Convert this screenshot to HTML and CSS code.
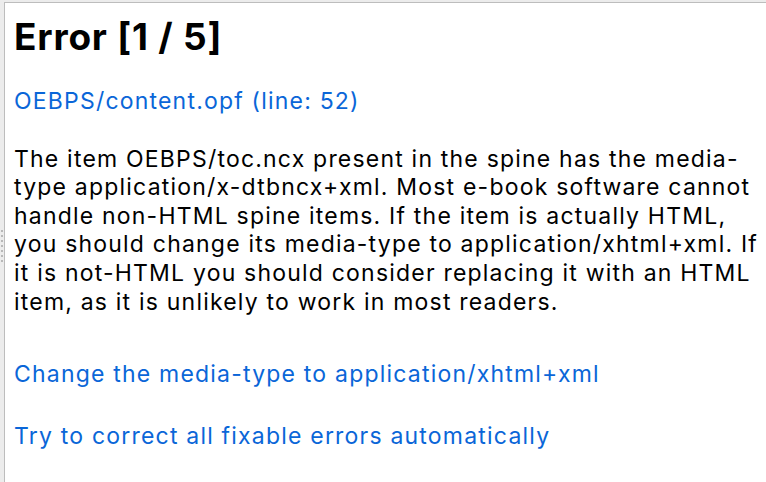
FILE: index.html
```html
<!DOCTYPE html>
<html lang="en">
<head>
<meta charset="utf-8">
<title>Error</title>
<link rel="stylesheet" href="styles.css">
</head>
<body>
<div class="gutter">
  <div class="grip"><span></span><span></span><span></span><span></span><span></span><span></span><span></span></div>
</div>
<main class="panel">
  <h1 class="title">Error [1 / 5]</h1>
  <p class="loc"><a href="#">OEBPS/content.opf (line: 52)</a></p>
  <p class="msg">The item OEBPS/toc.ncx present in the spine has the media-type application/x-dtbncx+xml. Most e-book software cannot handle non-HTML spine items. If the item is actually HTML, you should change its media-type to application/xhtml+xml. If it is not-HTML you should consider replacing it with an HTML item, as it is unlikely to work in most readers.</p>
  <p class="action"><a href="#">Change the media-type to application/xhtml+xml</a></p>
  <p class="action"><a href="#">Try to correct all fixable errors automatically</a></p>
</main>
</body>
</html>
```
FILE: styles.css
```css
html, body {
  margin: 0;
  height: 100%;
}
body {
  display: flex;
  box-sizing: border-box;
  padding-top: 2px;
  background: #ececec;
  font-family: "Inter", "Liberation Sans", sans-serif;
  color: #000;
  overflow: hidden;
}
.gutter {
  width: 4px;
  display: flex;
  align-items: center;
  justify-content: center;
}
.grip {
  display: flex;
  flex-direction: column;
  gap: 3px;
  margin-top: 8px;
}
.grip span {
  width: 2px;
  height: 2px;
  background: #b8b8b8;
}
.panel {
  flex: 1;
  background: #fff;
  border-top: 1px solid #bdbdbd;
  border-left: 1px solid #bdbdbd;
  padding: 0 2px 0 9px;
}
.title {
  font-size: 37px;
  font-weight: 700;
  letter-spacing: 0.8px;
  line-height: 44px;
  margin: 12px 0 0;
}
.loc, .msg, .action {
  font-size: 23px;
  letter-spacing: 1.2px;
  line-height: 28.6px;
  margin: 0;
}
.loc { margin-top: 28px; }
.msg { margin-top: 29px; }
.action { margin-top: 43.4px; }
.action + .action { margin-top: 33.4px; }
a {
  color: #0a66d8;
  text-decoration: none;
}
```
